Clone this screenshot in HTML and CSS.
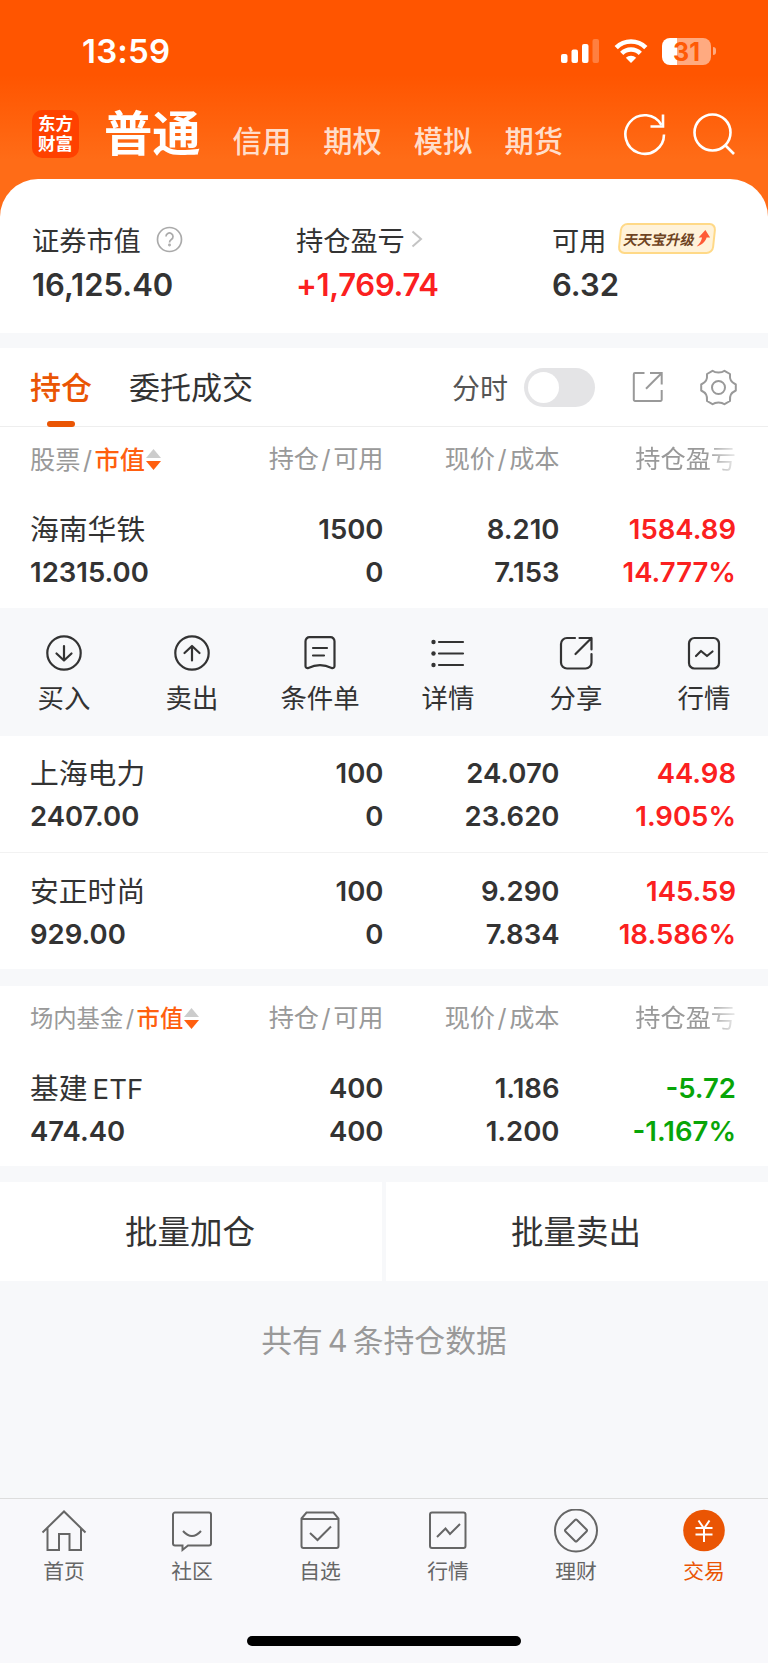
FILE: index.html
```html
<!DOCTYPE html>
<html lang="zh-CN">
<head>
  <meta charset="utf-8">
  <title>普通交易 - 持仓</title>
  <link rel="stylesheet" href="styles.css">
</head>
<body>
  <header class="top">
    <div class="statusbar">
      <span class="time">13:59</span>
      <svg class="signal" width="39" height="25" viewBox="0 0 39 25" fill="#fff">
        <rect x="0" y="15" width="6.5" height="9" rx="2"/>
        <rect x="10.5" y="10.5" width="6.5" height="13.5" rx="2"/>
        <rect x="21" y="5" width="6.5" height="19" rx="2"/>
        <rect x="31.5" y="0" width="6.5" height="24" rx="2" opacity=".25"/>
      </svg>
      <svg class="wifi" width="34" height="25" viewBox="0 0 34 25" fill="none" stroke="#fff" stroke-width="4.6">
        <path d="M2.2 8.6a21 21 0 0 1 29.6 0"/>
        <path d="M7.7 14.3a13.2 13.2 0 0 1 18.6 0"/>
        <path d="M17 24l-5.2-5.2a7.4 7.4 0 0 1 10.4 0z" fill="#fff" stroke="none"/>
      </svg>
      <div class="battery">31</div>
      <i class="battery-tip"></i>
    </div>
    <nav class="nav">
      <div class="logo"><span>东方</span><span>财富</span></div>
      <a class="nav-main">普通</a>
      <a>信用</a>
      <a>期权</a>
      <a>模拟</a>
      <a>期货</a>
      <svg class="refresh" width="44" height="44" viewBox="0 0 44 44" fill="none" stroke="#fff" stroke-width="2.6">
        <path d="M41 22.5A19.3 19.3 0 1 1 38.500 13"/>
        <path d="M40 2.5V14.5H27.5"/>
      </svg>
      <svg class="search" width="44" height="44" viewBox="0 0 44 44" fill="none" stroke="#fff" stroke-width="2.6">
        <circle cx="20.5" cy="20.5" r="18"/>
        <path d="M33 33l9 9"/>
      </svg>
    </nav>
  </header>

  <section class="summary">
    <div class="sum-item">
      <div class="sum-label">证券市值
        <svg class="help" width="27" height="27" viewBox="0 0 27 27" fill="none" stroke="#aaa" stroke-width="1.7">
          <circle cx="13.5" cy="13.5" r="12"/>
          <path d="M10 10.5a3.5 3.5 0 1 1 5.3 3c-1.3.9-1.8 1.5-1.8 3"/>
          <circle cx="13.5" cy="19" r=".6"/>
        </svg>
      </div>
      <div class="sum-value">16,125.40</div>
    </div>
    <div class="sum-item">
      <div class="sum-label">持仓盈亏
        <svg class="arrow" width="12" height="18" viewBox="0 0 12 18" fill="none" stroke="#c4c4c4" stroke-width="2">
          <path d="M1.5 1.5l8.5 7.5-8.5 7.5"/>
        </svg>
      </div>
      <div class="sum-value profit">+1,769.74</div>
    </div>
    <div class="sum-item">
      <div class="sum-label">可用
        <span class="badge">
          <span class="badge-text">天天宝升级</span>
          <svg width="13" height="17" viewBox="0 0 13 17">
            <path d="M7.5 0l5.500 7.500H9.5C9 11 6.5 14.5.5 16.5 3.5 13.5 4.5 11 5 7.500H1.5z" fill="#ff5a36"/>
          </svg>
        </span>
      </div>
      <div class="sum-value">6.32</div>
    </div>
  </section>

  <section class="tabs">
    <span class="tab active">持仓</span>
    <span class="tab">委托成交</span>
    <span class="switch-label">分时</span>
    <span class="switch"></span>
    <svg class="tool-share" width="32" height="32" viewBox="0 0 32 32" fill="none" stroke="#999" stroke-width="2">
      <path d="M12.5 2H3a1.2 1.2 0 0 0-1.2 1.2v25.6A1.2 1.2 0 0 0 3 30h25.5a1.2 1.2 0 0 0 1.2-1.2V19"/>
      <path d="M18 2h11.7v11.5M29.700 2L14 17.7"/>
    </svg>
    <svg class="tool-gear" width="37" height="37" viewBox="0 0 37 37" fill="none" stroke="#999" stroke-width="2" stroke-linejoin="round">
      <path d="M12.5 1.8C15.5 4.2 21.5 4.2 24.5 1.8L30 5C29.5 11 31 13 35.8 15.5V21.5C31 24 29.5 26 30 32L24.5 35.2C21.5 32.8 15.5 32.8 12.5 35.2L7 32C7.5 26 6 24 1.2 21.5V15.5C6 13 7.5 11 7 5z"/>
      <circle cx="18.5" cy="18.5" r="6.5"/>
    </svg>
  </section>

  <section class="holdings">
    <div class="row head">
      <span class="sort">股票<i>/</i><b>市值</b><svg width="15" height="22" viewBox="0 0 15 22"><path d="M7.5 0L15 9H0z" fill="#ccc"/><path d="M0 12h15l-7.5 9z" fill="#ff5f0f"/></svg></span>
      <span>持仓<i>/</i>可用</span>
      <span>现价<i>/</i>成本</span>
      <span class="fade">持仓盈亏</span>
    </div>
    <div class="row stock first">
      <span class="name">海南华铁</span><span>1500</span><span>8.210</span><span class="red">1584.89</span>
      <span>12315.00</span><span>0</span><span>7.153</span><span class="red">14.777%</span>
    </div>
    <div class="actions">
      <div class="action">
        <svg width="36" height="36" viewBox="0 0 36 36"><circle cx="18" cy="18" r="16.7"/><path d="M18 11V25.5M10.5 18.5l7.5 7 7.5-7"/></svg>
        <span>买入</span>
      </div>
      <div class="action">
        <svg width="36" height="36" viewBox="0 0 36 36"><circle cx="18" cy="18" r="16.7"/><path d="M18 25.5V11M10.5 18l7.5-7 7.5 7"/></svg>
        <span>卖出</span>
      </div>
      <div class="action">
        <svg width="36" height="36" viewBox="0 0 36 36"><path d="M7.5 2.2h21a4 4 0 0 1 4 4v25a2 2 0 0 1-2.8 1.7Q18 27.5 6.3 32.9a2 2 0 0 1-2.8-1.7v-25a4 4 0 0 1 4-4zM11 13h14M11 20.5h11"/></svg>
        <span>条件单</span>
      </div>
      <div class="action">
        <svg width="36" height="36" viewBox="0 0 36 36"><path d="M9 7h24M9 18.5h24M9 30h24"/><g fill="#333" stroke="none"><circle cx="3.5" cy="7" r="2.2"/><circle cx="3.5" cy="18.5" r="2.2"/><circle cx="3.5" cy="30" r="2.2"/></g></svg>
        <span>详情</span>
      </div>
      <div class="action">
        <svg width="36" height="36" viewBox="0 0 36 36"><path d="M17 3H9a6 6 0 0 0-6 6v18.5a6 6 0 0 0 6 6h18.5a6 6 0 0 0 6-6V19M21.5 3h12v11.5M33.5 3L17.5 19"/></svg>
        <span>分享</span>
      </div>
      <div class="action">
        <svg width="36" height="36" viewBox="0 0 36 36"><rect x="3" y="3" width="30" height="30.5" rx="5.5"/><path d="M10 21l5-5 6 5 5.5-4.5"/></svg>
        <span>行情</span>
      </div>
    </div>
    <div class="row stock second">
      <span class="name">上海电力</span><span>100</span><span>24.070</span><span class="red">44.98</span>
      <span>2407.00</span><span>0</span><span>23.620</span><span class="red">1.905%</span>
    </div>
    <div class="row stock">
      <span class="name">安正时尚</span><span>100</span><span>9.290</span><span class="red">145.59</span>
      <span>929.00</span><span>0</span><span>7.834</span><span class="red">18.586%</span>
    </div>
  </section>

  <section class="holdings funds">
    <div class="row head">
      <span class="sort small">场内基金<i>/</i><b>市值</b><svg width="15" height="22" viewBox="0 0 15 22"><path d="M7.5 0L15 9H0z" fill="#ccc"/><path d="M0 12h15l-7.5 9z" fill="#ff5f0f"/></svg></span>
      <span>持仓<i>/</i>可用</span>
      <span>现价<i>/</i>成本</span>
      <span class="fade">持仓盈亏</span>
    </div>
    <div class="row stock first">
      <span class="name">基建<em>ETF</em></span><span>400</span><span>1.186</span><span class="green">-5.72</span>
      <span>474.40</span><span>400</span><span>1.200</span><span class="green">-1.167%</span>
    </div>
  </section>

  <div class="batch">
    <div class="batch-btn">批量加仓</div>
    <div class="batch-btn">批量卖出</div>
  </div>
  <p class="total">共有<i>4</i>条持仓数据</p>

  <footer class="tabbar">
    <div class="tabbar-item">
      <svg width="46" height="44" viewBox="0 0 46 44"><path d="M1.5 23.5L23 2.5l21.5 21M6.5 19v22H18V25h10.5v16H40V19"/></svg>
      <span>首页</span>
    </div>
    <div class="tabbar-item">
      <svg width="46" height="44" viewBox="0 0 46 44"><path d="M6 3.5h34a2 2 0 0 1 2 2v29a2 2 0 0 1-2 2H19L13.500 41v-4.500H6a2 2 0 0 1-2-2v-29a2 2 0 0 1 2-2zM14 22q9 10 18 0"/></svg>
      <span>社区</span>
    </div>
    <div class="tabbar-item">
      <svg width="46" height="44" viewBox="0 0 46 44"><path d="M4.5 9.500L9.5 3.500h27l5 6V37a2 2 0 0 1-2 2h-33a2 2 0 0 1-2-2zM4.500 10h37M13 24l7.500 7L34 17.500"/></svg>
      <span>自选</span>
    </div>
    <div class="tabbar-item">
      <svg width="46" height="44" viewBox="0 0 46 44"><rect x="5" y="3.5" width="35.5" height="35.5" rx="2"/><path d="M12 28l8.500-8.500 4.500 5.500 10-10"/></svg>
      <span>行情</span>
    </div>
    <div class="tabbar-item">
      <svg width="46" height="44" viewBox="0 0 46 44"><circle cx="23" cy="21.5" r="21"/><path d="M22 11q1-1 2 0l9.500 9.500q1 1 0 2L24 32q-1 1-2 0l-9.500-9.500q-1-1 0-2z"/></svg>
      <span>理财</span>
    </div>
    <div class="tabbar-item current">
      <svg width="46" height="44" viewBox="0 0 46 44"><circle cx="23" cy="21.5" r="20.8" fill="#ea5504" stroke="none"/><path d="M17.5 11.5L23 19.5l5.500-8M23 19.500V33M14.500 19h17M14.500 25.500h17" stroke="#fff"/></svg>
      <span>交易</span>
    </div>
    <div class="home-indicator"></div>
  </footer>
</body>
</html>
```
FILE: styles.css
```css
* {
  box-sizing: border-box;
}

body {
  margin: 0;
  width: 768px;
  height: 1663px;
  display: flex;
  flex-direction: column;
  overflow: hidden;
  background: #f7f8fa;
  color: #333;
  font-family: Inter, "Noto Sans CJK SC", sans-serif;
}

i, em {
  font-style: normal;
}

svg {
  display: block;
  flex: none;
}

.red, .profit {
  color: #fb2020;
}

.green {
  color: #08a508;
}

/* header */
.top {
  height: 240px;
  flex: none;
  background: linear-gradient(#ff5500 0, #ff5500 75px, #ff6c17 160px, #ff6c17 100%);
  color: #fff;
}

.statusbar {
  height: 102px;
  padding: 0 52px 0 82px;
  display: flex;
  align-items: center;
}

.time {
  margin-right: auto;
  font-size: 33px;
  font-weight: 600;
  letter-spacing: 0.2px;
}

.signal {
  margin-right: 1px;
}

.wifi {
  margin: 0 14px 0 13px;
}

.battery {
  width: 49px;
  height: 27px;
  border-radius: 8px;
  background: linear-gradient(90deg, #fff 15px, rgba(255, 255, 255, .5) 15px);
  color: #ff5a05;
  font-size: 25px;
  font-weight: 700;
  line-height: 28px;
  text-align: center;
}

.battery-tip {
  width: 3px;
  height: 8px;
  margin-left: 2px;
  border-radius: 0 3px 3px 0;
  background: rgba(255, 255, 255, .5);
}

.nav {
  display: flex;
  align-items: center;
  padding: 0 32px;
  height: 64px;
}

.nav a {
  padding-top: 15px;
  margin-right: 32px;
  font-size: 29.3px;
  font-weight: 500;
  line-height: 40px;
  color: rgba(255, 255, 255, .8);
}

.nav .nav-main {
  padding-top: 0;
  margin: 0 32px 0 25px;
  font-size: 48.3px;
  font-weight: 700;
  line-height: 64px;
  color: #fff;
}

.logo {
  width: 47px;
  height: 48px;
  padding-top: 4px;
  border-radius: 10px;
  background: #ff4100;
  font-size: 17.5px;
  font-weight: 700;
  line-height: 20px;
  text-align: center;
}

.logo span {
  display: block;
}

.refresh {
  margin-left: auto;
}

.search {
  margin: 0 0 0 25px;
}

/* account summary */
.summary {
  flex: none;
  height: 154px;
  margin-top: -61px;
  padding: 40px 32px 0;
  display: grid;
  grid-template-columns: 264px 256px 1fr;
  background: #fff;
  border-radius: 38px 38px 0 0;
}

.sum-label {
  display: flex;
  align-items: center;
  height: 41px;
  padding-bottom: 1px;
  font-size: 27.2px;
  white-space: nowrap;
}

.help {
  margin-left: 15px;
}

.arrow {
  margin-left: 6px;
}

.badge {
  display: flex;
  align-items: center;
  justify-content: center;
  gap: 3px;
  width: 96px;
  height: 31px;
  margin: -2px 0 0 13px;
  border: 2px solid #ffd987;
  border-radius: 7px;
  background: #fff2d9;
  transform: skewX(-6deg);
}

.badge-text {
  font-size: 14.2px;
  font-weight: 700;
  color: #6f4423;
  transform: skewX(-6deg);
}

.sum-value {
  font-size: 31px;
  font-weight: 600;
  line-height: 49px;
}

.sum-value.profit {
  letter-spacing: -0.3px;
}

/* tabs */
.tabs {
  flex: none;
  height: 79px;
  margin-top: 15px;
  padding: 0 31px 0 30px;
  display: flex;
  align-items: center;
  background: #fff;
  border-bottom: 1px solid #eee;
}

.tab {
  position: relative;
  padding-top: 1px;
  margin-right: 37px;
  font-size: 31px;
  line-height: 79px;
}

.tab.active {
  color: #ea5504;
  font-weight: 500;
}

.tab.active::after {
  content: "";
  position: absolute;
  left: 17px;
  bottom: 0;
  width: 28px;
  height: 6px;
  border-radius: 3px;
  background: #ea5504;
}

.switch-label {
  margin-left: auto;
  font-size: 28px;
  color: #555;
}

.switch {
  width: 71px;
  height: 39px;
  margin-left: 16px;
  padding: 4px;
  border-radius: 20px;
  background: #e4e4e6;
}

.switch::before {
  content: "";
  display: block;
  width: 31px;
  height: 31px;
  border-radius: 50%;
  background: #fff;
}

.tool-share {
  margin-left: 37px;
}

.tool-gear {
  margin-left: 36px;
}

/* holdings table */
.holdings {
  flex: none;
  background: #fff;
}

.row {
  display: grid;
  grid-template-columns: 177.5px 176px 176px 176.5px;
  padding-left: 30px;
  text-align: right;
  white-space: nowrap;
}

.row > span:nth-child(4n + 1) {
  text-align: left;
}

.head {
  height: 65px;
  font-size: 25.2px;
  line-height: 64px;
  color: #999;
}

.head i {
  margin: 0 2.5px;
}

.head b {
  font-weight: 500;
  color: #ff5f0f;
}

.sort {
  display: flex;
  align-items: center;
}

.sort svg {
  margin-left: 1px;
}

.small {
  font-size: 23.3px;
}

.head .fade {
  -webkit-mask-image: linear-gradient(90deg, #000 146px, rgba(0, 0, 0, .2) 100%);
  mask-image: linear-gradient(90deg, #000 146px, rgba(0, 0, 0, .2) 100%);
}

.stock {
  height: 117px;
  padding-top: 17px;
  grid-auto-rows: 43px;
  align-content: start;
  font-size: 27.5px;
  font-weight: 600;
  line-height: 43px;
}

.stock + .stock {
  border-top: 1px solid #f2f2f2;
}

.stock.first {
  height: 116px;
  padding-top: 16px;
}

.stock.second {
  height: 116px;
  padding-top: 16px;
}

.name {
  font-size: 28.8px;
  font-weight: 400;
}

.name em {
  margin-left: 5px;
  font-size: 27.5px;
}

.actions {
  display: flex;
  height: 128px;
  padding-top: 27px;
  background: #f7f8fa;
}

.action {
  flex: 1;
  display: flex;
  flex-direction: column;
  align-items: center;
  font-size: 26.4px;
  line-height: 54px;
}

.action svg {
  margin-left: -1px;
  fill: none;
  stroke: #333;
  stroke-width: 2.2;
  stroke-linecap: round;
  stroke-linejoin: round;
}

.funds {
  margin-top: 17px;
}

.funds .stock.first {
  height: 115px;
}

/* batch buttons */
.batch {
  flex: none;
  display: flex;
  gap: 4px;
  margin-top: 16px;
}

.batch-btn {
  flex: 1;
  height: 99px;
  padding-right: 2px;
  background: #fff;
  font-size: 32.5px;
  line-height: 102px;
  text-align: center;
}

.total {
  margin: 38px 0 0;
  font-size: 30.8px;
  line-height: 44px;
  text-align: center;
  color: #999;
}

.total i {
  margin: 0 5px;
}

/* bottom bar */
.tabbar {
  position: relative;
  flex: none;
  display: flex;
  height: 165px;
  margin-top: auto;
  padding-top: 10px;
  background: #f8f8fb;
  border-top: 1px solid #ddd;
}

.tabbar-item {
  flex: 1;
  display: flex;
  flex-direction: column;
  align-items: center;
  font-size: 20.8px;
  line-height: 38px;
  color: #666;
}

.tabbar-item svg {
  fill: none;
  stroke: #666;
  stroke-width: 2;
}

.tabbar-item.current {
  color: #ea5504;
}

.home-indicator {
  position: absolute;
  left: 247px;
  bottom: 17px;
  width: 274px;
  height: 10px;
  border-radius: 5px;
  background: #000;
}
```
